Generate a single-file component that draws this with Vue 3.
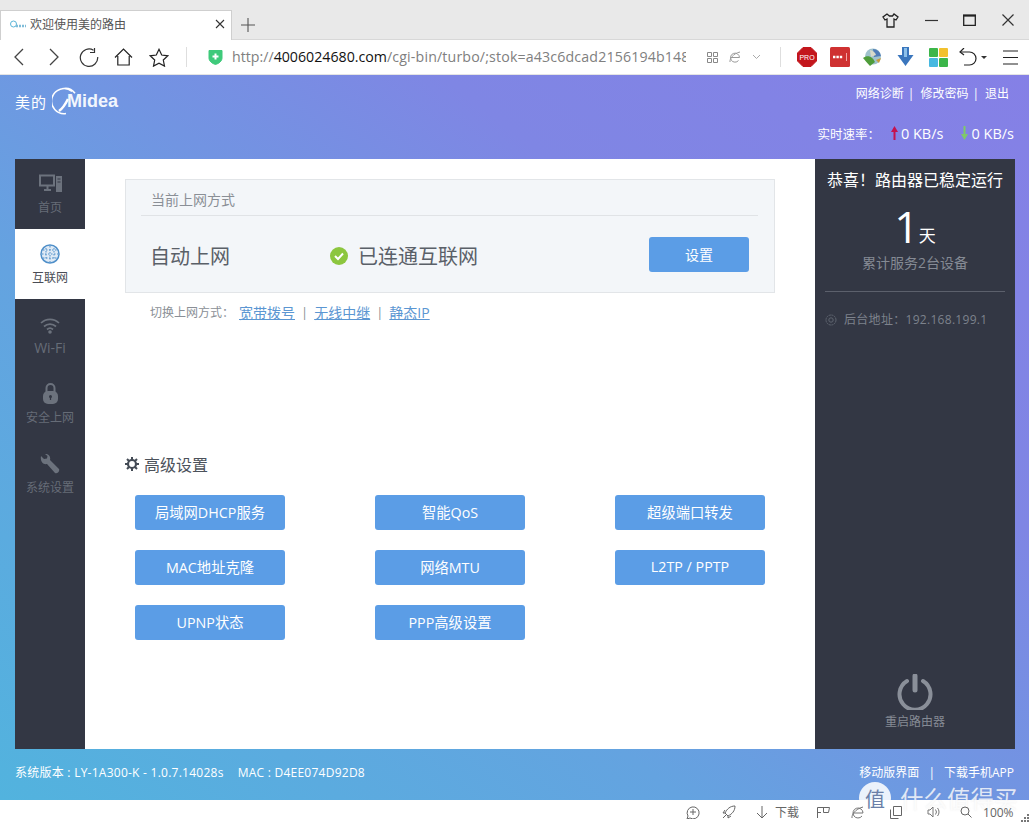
<script setup>
const navItems = [
  { key: 'home', label: '首页' },
  { key: 'net', label: '互联网', active: true },
  { key: 'wifi', label: 'Wi-Fi' },
  { key: 'lock', label: '安全上网' },
  { key: 'tool', label: '系统设置' }
]
const advanced = ['局域网DHCP服务', '智能QoS', '超级端口转发', 'MAC地址克隆', '网络MTU', 'L2TP / PPTP', 'UPNP状态', 'PPP高级设置']
</script>

<template>
  <div class="window">
    <div class="tabbar">
      <div class="tab">
        <svg class="favicon" width="17" height="8" viewBox="0 0 17 8"><circle cx="3.5" cy="4" r="3" fill="none" stroke="#5bb5d8" stroke-width="1"/><path d="M6 6h10" stroke="#7fbcd8" stroke-width="2.4" stroke-dasharray="2 1"/></svg>
        <span class="tab-title">欢迎使用美的路由</span>
        <svg class="tab-close" width="10" height="10" viewBox="0 0 10 10"><path d="M1 1l8 8M9 1l-8 8" stroke="#333" stroke-width="1.1"/></svg>
      </div>
      <svg class="newtab" width="14" height="14" viewBox="0 0 14 14"><path d="M7 0v14M0 7h14" stroke="#555" stroke-width="1.1"/></svg>
      <div class="winctl">
        <svg width="17" height="15" viewBox="0 0 17 15"><path d="M5 1L1 4l2 3 2-1v8h7V6l2 1 2-3-4-3-1.500 2h-3z" fill="none" stroke="#222" stroke-width="1.300"/></svg>
        <svg width="13" height="3" viewBox="0 0 13 3"><path d="M0 1.500h13" stroke="#333" stroke-width="1.200"/></svg>
        <svg width="13" height="12" viewBox="0 0 13 12"><path d="M.7 1.500h11.600v9.800H.7z" fill="none" stroke="#222" stroke-width="1.300"/><path d="M0 1.500h13" stroke="#222" stroke-width="2"/></svg>
        <svg width="12" height="12" viewBox="0 0 12 12"><path d="M.5.500l11 11M11.500.500l-11 11" stroke="#333" stroke-width="1.200"/></svg>
      </div>
    </div>

    <div class="toolbar">
      <div class="navbtns">
        <svg width="12" height="18" viewBox="0 0 12 18"><path d="M10 1L2 9l8 8" fill="none" stroke="#444" stroke-width="1.300"/></svg>
        <svg width="12" height="18" viewBox="0 0 12 18"><path d="M2 1l8 8-8 8" fill="none" stroke="#444" stroke-width="1.300"/></svg>
        <svg width="20" height="20" viewBox="0 0 20 20"><path d="M14.500 3.200A8.700 8.700 0 1 0 18.700 10" fill="none" stroke="#333" stroke-width="1.200"/><path d="M15.500 1v4.500H11" fill="none" stroke="#333" stroke-width="1.200"/></svg>
        <svg width="19" height="18" viewBox="0 0 19 18"><path d="M1 9.500L9.500 1 18 9.500M3.800 8v9h11.400V8" fill="none" stroke="#222" stroke-width="1.200"/></svg>
        <svg width="20" height="19" viewBox="0 0 20 19"><path d="M10 1.300l2.700 5.700 6.100.8-4.500 4.200 1.200 6.100L10 15.100l-5.500 3 1.200-6.100L1.200 7.800 7.300 7z" fill="none" stroke="#222" stroke-width="1.200"/></svg>
      </div>
      <span class="divider first"></span>
      <svg class="shield" width="15" height="16" viewBox="0 0 15 16"><path d="M1 1.500h13v7.500c0 3-3 5.500-6.500 6.500C4 14.500 1 12 1 9z" fill="#3fca7b" stroke="#3fca7b" stroke-linejoin="round"/><path d="M7.500 4.500v6M4.500 7.500h6" stroke="#fff" stroke-width="2"/></svg>
      <div class="url"><span class="dim">http://</span><span class="host">4006024680.com</span><span class="dim path">/cgi-bin/turbo/;stok=a43c6dcad2156194b148</span></div>
      <div class="urlicons">
        <svg width="11" height="11" viewBox="0 0 11 11"><g fill="none" stroke="#888"><path d="M.5.500h4v4h-4zM6.500.500h4v4h-4zM.5 6.500h4v4h-4zM6.500 6.500h4v4h-4z"/></g></svg>
        <svg width="12" height="12" viewBox="0 0 12 12"><path d="M2 6.500h8.500A4.500 4.500 0 1 0 9.500 9.500M1 11C.5 8 4 2.500 11 1" fill="none" stroke="#999"/></svg>
        <svg width="9" height="6" viewBox="0 0 9 6"><path d="M1 1l3.500 3.500L8 1" fill="none" stroke="#aaa"/></svg>
      </div>
      <span class="divider second"></span>
      <div class="exts">
        <svg width="20" height="20" viewBox="0 0 20 20"><path d="M6 .500h8L19.500 6v8L14 19.500H6L.5 14V6z" fill="#c3161c" stroke="#c3161c" stroke-linejoin="round"/><text x="10" y="13" class="ext-text">PRO</text></svg>
        <svg width="20" height="20" viewBox="0 0 20 20"><rect width="20" height="20" rx="1.500" fill="#cf3131"/><path d="M3 10h10" stroke="#fff" stroke-width="2.400" stroke-dasharray="2.400 1"/><path d="M16.500 6v8" stroke="#f2a6a6"/></svg>
        <svg width="21" height="20" viewBox="0 0 21 20"><circle cx="11" cy="9.500" r="8" fill="#9fc2cc"/><path d="M11 2a8 8 0 0 1 8 7l-7 1z" fill="#4f7cb8"/><path d="M1 11c5-4 10-1 12 4l-5 4c-3-3-5-6-7-8z" fill="#4f9c3a"/><path d="M8 3c3 1 5 2 6 5l-5 2z" fill="#d7d9c9"/><path d="M14 13l5-2-2 5z" fill="#c89a3c"/></svg>
        <svg width="17" height="20" viewBox="0 0 17 20"><path d="M5 0h7v8h4.500l-8 11L.5 8H5z" fill="#3a76bd"/><path d="M7 1h3v9H7z" fill="#8cc0ea"/></svg>
        <svg width="19" height="19" viewBox="0 0 19 19"><rect width="9" height="9" rx="1" fill="#3cb64a"/><rect x="10" width="9" height="9" rx="1" fill="#f2c12e"/><rect y="10" width="9" height="9" rx="1" fill="#46b8e0"/><rect x="10" y="10" width="9" height="9" rx="1" fill="#3cb64a"/></svg>
        <div class="undo">
          <svg width="19" height="18" viewBox="0 0 19 18"><path d="M1 4h9.500a6.500 6.500 0 0 1 0 13H5" fill="none" stroke="#222" stroke-width="1.200"/><path d="M5 0L1 4l4 3" fill="none" stroke="#222" stroke-width="1.200"/></svg>
          <svg width="6" height="3" viewBox="0 0 6 3"><path d="M0 0h6L3 3z" fill="#333"/></svg>
        </div>
        <svg width="15" height="15" viewBox="0 0 15 15"><path d="M0 1h15M0 7.500h15M0 14h15" stroke="#222" stroke-width="1.100"/></svg>
      </div>
    </div>

    <div class="page">
      <header class="head">
        <div class="logo">
          <span class="logo-cn">美的</span>
          <svg class="logo-mark" width="26" height="28" viewBox="0 0 26 28"><path d="M20 4.500A12.500 12.500 0 1 0 14 26.500M10 1.800c5-1.500 10 .5 13 4.500" fill="none" stroke="#fff" stroke-width="1.500"/><path d="M7 24c3-2 6-6 9-12" fill="none" stroke="#fff" stroke-width="2.500"/></svg>
          <span class="logo-en">Midea</span>
        </div>
        <div class="head-right">
          <div class="head-links"><span>网络诊断</span><i>|</i><span>修改密码</span><i>|</i><span>退出</span></div>
          <div class="speed">
            <span class="speed-label">实时速率&#xFF1A;</span>
            <svg width="7" height="14" viewBox="0 0 7 14"><path d="M3.500 0L7 6H4.500v8h-2V6H0z" fill="#c4124f"/></svg>
            <span class="speed-val">0 KB/s</span>
            <svg class="down" width="7" height="14" viewBox="0 0 7 14"><path d="M3.500 14L7 8H4.500V0h-2v8H0z" fill="#7fc96a"/></svg>
            <span class="speed-val">0 KB/s</span>
          </div>
        </div>
      </header>

      <main class="panel">
        <nav class="side">
          <div v-for="item in navItems" :key="item.key" class="nav-item" :class="{ active: item.active }">
            <svg v-if="item.key === 'home'" width="23" height="20" viewBox="0 0 23 20"><path d="M1 1.500h14v10H1z" fill="none" stroke="#6c727d" stroke-width="2"/><path d="M5 16h7M8.500 12v4" stroke="#6c727d" stroke-width="2"/><path d="M17 2h6v16h-6z" fill="#6c727d"/><path d="M18.500 5h3M18.500 8h3" stroke="#333744"/></svg>
            <svg v-else-if="item.key === 'net'" width="20" height="20" viewBox="0 0 20 20"><circle cx="10" cy="10" r="9" fill="#dfeaf5" stroke="#4f8fc9" stroke-width="1.500"/><path d="M6 4v12M10 2v16M14 4v12M3 6h14M2 10h16M3 14h14" stroke="#4f8fc9" stroke-dasharray="1.500 1.500"/></svg>
            <svg v-else-if="item.key === 'wifi'" width="20" height="17" viewBox="0 0 20 17"><path d="M1 6a13 13 0 0 1 18 0M4 9.500a9 9 0 0 1 12 0M7 12.500a4.500 4.500 0 0 1 6 0" fill="none" stroke="#6c727d" stroke-width="1.700"/><circle cx="10" cy="15" r="1.800" fill="#6c727d"/></svg>
            <svg v-else-if="item.key === 'lock'" width="15" height="21" viewBox="0 0 15 21"><path d="M3.500 9V5a4 4 0 0 1 8 0v4" fill="none" stroke="#6c727d" stroke-width="2"/><rect y="8" width="15" height="13" rx="5" fill="#6c727d"/><circle cx="7.500" cy="13.500" r="1.500" fill="#333744"/><path d="M7.500 14v3" stroke="#333744" stroke-width="1.200"/></svg>
            <svg v-else width="20" height="20" viewBox="0 0 20 20"><path d="M1 2l3 3 3-.5.500-2.500L5 0c3-.5 6 2 5 6l9 9c1 2-1.500 5-4 4l-8-9c-4 1-7-3-6-8z" fill="#6c727d"/></svg>
            <span>{{ item.label }}</span>
          </div>
        </nav>

        <section class="content">
          <div class="card">
            <div class="card-title">当前上网方式</div>
            <div class="card-row">
              <span class="mode">自动上网</span>
              <span class="state">
                <svg width="18" height="18" viewBox="0 0 18 18"><circle cx="9" cy="9" r="9" fill="#8cc63f"/><path d="M5 9l3 3 5-5.500" fill="none" stroke="#fff" stroke-width="2"/></svg>
                已连通互联网
              </span>
              <button class="btn setbtn">设置</button>
            </div>
          </div>
          <div class="switch">
            <span class="switch-label">切换上网方式&#xFF1A;</span>
            <a>宽带拨号</a><i>|</i><a>无线中继</a><i>|</i><a>静态IP</a>
          </div>
          <h3 class="adv-title">
            <svg width="14" height="14" viewBox="0 0 14 14"><circle cx="7" cy="7" r="4" fill="none" stroke="#444b55" stroke-width="2.200"/><path d="M7 0v3M7 11v3M0 7h3M11 7h3M2 2l2 2M10 10l2 2M12 2l-2 2M4 10l-2 2" stroke="#444b55" stroke-width="2"/></svg>
            高级设置
          </h3>
          <div class="adv-grid">
            <button v-for="name in advanced" :key="name" class="btn">{{ name }}</button>
          </div>
        </section>

        <aside class="status">
          <div class="status-title">恭喜&#xFF01;路由器已稳定运行</div>
          <div class="uptime"><b>1</b><span>天</span></div>
          <div class="served">累计服务2台设备</div>
          <div class="addr">
            <svg width="12" height="12" viewBox="0 0 12 12"><circle cx="6" cy="6" r="5" fill="none" stroke="#5f6570" stroke-dasharray="2 .6"/><circle cx="6" cy="6" r="2.200" fill="none" stroke="#5f6570"/></svg>
            <span>后台地址&#xFF1A;192.168.199.1</span>
          </div>
          <div class="reboot">
            <svg width="36" height="36" viewBox="0 0 36 36"><path d="M10 7a15.500 15.500 0 1 0 16 0" fill="none" stroke="#8a8f99" stroke-width="4" stroke-linecap="round"/><path d="M18 2v14" stroke="#8a8f99" stroke-width="5" stroke-linecap="round"/></svg>
            <span>重启路由器</span>
          </div>
        </aside>
      </main>

      <footer class="foot">
        <span class="foot-left">系统版本 : LY-1A300-K - 1.0.7.14028s<em>MAC : D4EE074D92D8</em></span>
        <span class="foot-right">移动版界面<i>|</i>下载手机APP</span>
      </footer>
    </div>

    <div class="statusbar">
      <svg width="14" height="14" viewBox="0 0 14 14"><path d="M2 11a6 6 0 1 1 2 2l-3 1zM7 4v6M4 7h6" fill="none" stroke="#666"/></svg>
      <svg class="rocket" width="14" height="14" viewBox="0 0 14 14"><path d="M13 1C8 1 5 4 3 8l3 3c4-2 7-5 7-10zM3 8L1 8l2-3M6 11v2l3-2M1 13l3-3" fill="none" stroke="#666"/></svg>
      <svg class="arrow" width="12" height="13" viewBox="0 0 12 13"><path d="M6 0v12M1 7l5 5 5-5" fill="none" stroke="#666"/></svg>
      <span class="dl">下载</span>
      <svg class="flag" width="13" height="11" viewBox="0 0 13 11"><path d="M.5 11V.500h12l-1 5H6.500V.500M.5 5.500h3.500" fill="none" stroke="#666"/></svg>
      <svg class="ie" width="13" height="13" viewBox="0 0 13 13"><path d="M2 7h10A5 5 0 1 0 11 10M1 12C.5 9 4 3 12 1" fill="none" stroke="#777"/></svg>
      <svg class="win" width="12" height="13" viewBox="0 0 12 13"><path d="M3.500.500h8v9h-8zM.5 3.500v9h8" fill="none" stroke="#666"/></svg>
      <svg class="sound" width="13" height="12" viewBox="0 0 13 12"><path d="M1 4h2l3-3v10L3 8H1zM8.500 3.500a4 4 0 0 1 0 5M10.500 2a6 6 0 0 1 0 8" fill="none" stroke="#777"/></svg>
      <svg class="zoom" width="12" height="12" viewBox="0 0 12 12"><circle cx="5" cy="5" r="4" fill="none" stroke="#666"/><path d="M8 8l3.500 3.500" stroke="#666"/></svg>
      <span class="pct">100%</span>
      <svg class="grip" width="9" height="9" viewBox="0 0 9 9"><path d="M7 1h2v2H7zM4 4h2v2H4zM7 4h2v2H7zM1 7h2v2H1zM4 7h2v2H4zM7 7h2v2H7z" fill="#777"/></svg>
    </div>

    <div class="watermark">
      <span class="wm-badge">值</span>
      <span class="wm-text">什么值得买</span>
    </div>
  </div>
</template>

<style>
html, body { margin: 0; padding: 0; background: #fff; }
</style>

<style scoped>
* { box-sizing: border-box; }
.window {
  position: relative;
  width: 1029px;
  height: 824px;
  overflow: hidden;
  display: flex;
  flex-direction: column;
  background: #fff;
  font-family: "Open Sans", "Noto Sans CJK SC", sans-serif;
  font-weight: 400;
  color: #fff;
}
.tabbar {
  height: 40px;
  background: #e9e9e9;
  border-bottom: 1px solid #d8d8d8;
  padding-top: 10px;
  display: flex;
  align-items: flex-start;
  flex: none;
}
.tab {
  width: 232px;
  height: 30px;
  background: #fff;
  border: 1px solid #cfcfcf;
  border-bottom: 0;
  display: flex;
  align-items: center;
  padding: 0 6px 3px 9px;
  color: #555;
  font-size: 12px;
}
.favicon { margin-right: 3px; }
.tab-title { flex: 1; }
.newtab { margin: 8px 0 0 9px; }
.winctl {
  margin-left: auto;
  margin-top: 2px;
  width: 147px;
  height: 16px;
  padding-right: 15px;
  display: flex;
  align-items: center;
  justify-content: space-between;
}
.toolbar {
  height: 35px;
  background: #fff;
  display: flex;
  align-items: center;
  flex: none;
  border-bottom: 1px solid #e4e4e4;
  color: #777;
}
.navbtns {
  width: 183px;
  padding-left: 1px;
  display: grid;
  grid-template-columns: repeat(5, 35px);
  justify-items: center;
  align-items: center;
}
.divider { width: 1px; height: 20px; background: #dedede; flex: none; }
.first { margin-left: 3px; }
.shield { margin-left: 21px; flex: none; }
.url {
  width: 454px;
  margin-left: 9px;
  font-size: 14.200px;
  white-space: nowrap;
  overflow: hidden;
  line-height: 20px;
}
.dim { color: #808080; }
.path { letter-spacing: .15px; }
.host { color: #111; }
.urlicons {
  width: 70px;
  margin-left: 21px;
  display: flex;
  align-items: center;
  gap: 11px;
  flex: none;
}
.second { margin-left: 3px; }
.exts {
  margin-left: 9px;
  display: grid;
  grid-template-columns: repeat(5, 33px) 36px 38px;
  justify-items: center;
  align-items: center;
}
.ext-text { font-size: 7px; fill: #fff; text-anchor: middle; font-family: "Liberation Sans", sans-serif; }
.undo { display: flex; align-items: center; gap: 3px; }
.page {
  height: 725px;
  flex: none;
  display: flex;
  flex-direction: column;
  padding: 0 14px 0 15px;
  background: linear-gradient(38deg, #52b3de 0%, #64a3e0 35%, #7f86e4 70%, #8580e6 100%);
}
.head {
  height: 84px;
  flex: none;
  display: flex;
  justify-content: space-between;
}
.logo {
  display: flex;
  align-items: center;
  height: 50px;
  margin-top: 1px;
}
.logo-cn { font-size: 15px; letter-spacing: 1px; margin-right: 5px; margin-top: 1px; }
.logo-mark { margin-right: -11px; }
.logo-en { font-family: "Liberation Sans", sans-serif; font-weight: 700; font-size: 18px; margin-top: 1px; color: #f2f6fd; }
.head-right { display: flex; flex-direction: column; align-items: flex-end; }
.head-links {
  font-size: 12px;
  line-height: 18px;
  margin-top: 10px;
  padding-right: 6px;
  display: flex;
}
.head-links i { font-style: normal; margin: 0 6px 0 4px; }
.speed {
  margin-top: 20px;
  display: flex;
  align-items: center;
  height: 20px;
  font-size: 12.500px;
  padding-right: 1px;
}
.speed-label { margin-right: 11px; }
.speed-val { font-size: 14.500px; margin-left: 3px; }
.down { margin-left: 18px; }
.panel {
  height: 590px;
  flex: none;
  display: flex;
  background: #fff;
}
.side {
  width: 70px;
  flex: none;
  background: #333744;
  display: flex;
  flex-direction: column;
}
.nav-item {
  height: 70px;
  display: flex;
  flex-direction: column;
  align-items: center;
  justify-content: flex-end;
  gap: 5px;
  padding-bottom: 13px;
  font-size: 12px;
  line-height: 17px;
  color: #666c77;
}
.nav-item svg { display: block; }
.nav-item:nth-child(3) span { font-size: 14px; }
.nav-item.active { background: #fff; color: #4a4d55; }
.content {
  width: 730px;
  flex: none;
  padding: 20px 40px 0;
  color: #444b55;
}
.card {
  height: 114px;
  width: 650px;
  background: #f3f6f9;
  border: 1px solid #e2e5e8;
  padding: 0 16px 0 15px;
}
.card-title {
  height: 36px;
  line-height: 39px;
  padding-left: 10px;
  font-size: 14px;
  color: #8a8f96;
  border-bottom: 1px solid #e0e3e6;
}
.card-row {
  display: flex;
  align-items: center;
  height: 76px;
  padding-left: 9px;
  padding-top: 3px;
}
.mode { font-size: 20px; color: #5a6068; width: 180px; }
.state { font-size: 20px; color: #5a6068; display: flex; align-items: center; gap: 10px; width: 319px; }
.btn {
  width: 150px;
  height: 35px;
  border: 0;
  border-radius: 3px;
  background: #5b9de6;
  color: #fff;
  font: inherit;
  font-size: 14.300px;
  padding: 0 0 2px;
}
.setbtn { width: 100px; font-size: 14px; margin-top: -3px; padding: 0; }
.switch {
  margin: 9px 0 0 25px;
  display: flex;
  align-items: center;
  height: 20px;
  font-size: 14px;
  color: #8a8f96;
}
.switch-label { font-size: 12px; margin-right: 5px; }
.switch a { color: #5b96d2; text-decoration: underline; }
.switch i { font-style: normal; margin: 0 6px; font-size: 13px; }
.adv-title {
  margin: 130px 0 0;
  height: 24px;
  display: flex;
  align-items: center;
  gap: 5px;
  font-size: 16px;
  font-weight: 400;
  color: #4c525b;
}
.adv-grid {
  margin: 19px 0 0 10px;
  display: grid;
  grid-template-columns: repeat(3, 150px);
  column-gap: 90px;
  row-gap: 20px;
}
.status {
  width: 200px;
  flex: none;
  background: #333744;
  display: flex;
  flex-direction: column;
  align-items: center;
  padding-top: 11px;
}
.status-title { font-size: 16px; line-height: 20px; color: #fff; white-space: nowrap; }
.uptime { margin-top: 12px; height: 50px; display: flex; align-items: flex-end; line-height: 50px; }
.uptime b { font-weight: 400; font-size: 43px; }
.uptime span { font-size: 17px; line-height: 32px; }
.served {
  width: 180px;
  height: 40px;
  text-align: center;
  font-size: 14px;
  line-height: 20px;
  padding-top: 1px;
  color: #858a94;
  border-bottom: 1px solid #5c606c;
}
.addr {
  width: 200px;
  margin-top: 19px;
  padding-left: 10px;
  display: flex;
  align-items: center;
  gap: 7px;
  font-size: 12px;
  line-height: 18px;
  letter-spacing: .3px;
  color: #7d828c;
  white-space: nowrap;
}
.reboot {
  margin-top: auto;
  margin-bottom: 18px;
  display: flex;
  flex-direction: column;
  align-items: center;
  gap: 3px;
  font-size: 12px;
  line-height: 18px;
  color: #858a94;
}
.foot {
  flex: 1;
  display: flex;
  justify-content: space-between;
  align-items: flex-start;
  padding-top: 15px;
  font-size: 12px;
  line-height: 18px;
}
.foot-left { letter-spacing: .25px; }
.foot em { font-style: normal; margin-left: 14px; }
.foot-right { margin-right: 1px; }
.foot-right i { font-style: normal; margin: 0 9px; }
.statusbar {
  height: 24px;
  flex: none;
  position: relative;
  z-index: 2;
  display: flex;
  align-items: center;
  padding-left: 686px;
  color: #666;
  font-size: 12px;
}
.rocket { margin-left: 22px; }
.arrow { margin-left: 20px; }
.dl { margin-left: 7px; }
.flag { margin-left: 18px; }
.ie { margin-left: 21px; }
.win { margin-left: 26px; }
.sound { margin-left: 25px; }
.zoom { margin-left: 20px; }
.pct { margin-left: 11px; }
.grip { position: absolute; right: 0; bottom: 2px; }
.watermark {
  position: absolute;
  z-index: 1;
  left: 859px;
  top: 782px;
  display: flex;
  align-items: center;
  gap: 9px;
  height: 32px;
}
.wm-badge {
  width: 32px;
  height: 32px;
  border-radius: 50%;
  background: #ffffffdd;
  color: #6a7fa8;
  display: flex;
  align-items: center;
  justify-content: center;
  font-size: 20px;
}
.wm-text { font-size: 23.500px; color: #ffffffcc; white-space: nowrap; text-shadow: 0 0 2px #9993; }
</style>
